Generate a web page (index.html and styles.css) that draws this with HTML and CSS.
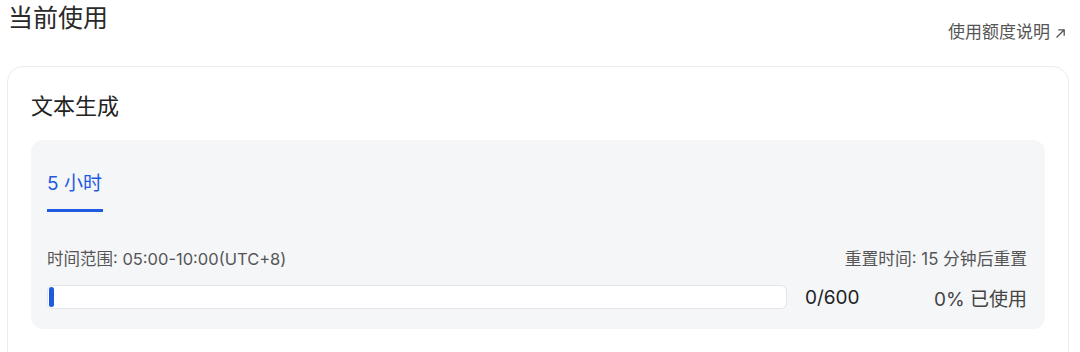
FILE: index.html
```html
<!DOCTYPE html>
<html lang="zh">
<head>
<meta charset="utf-8">
<link rel="stylesheet" href="styles.css">
</head>
<body>
<div class="page">
  <div class="header">
    <h1 class="title">当前使用</h1>
    <a class="doc-link" href="#">使用额度说明
      <svg class="arrow" width="11" height="11" viewBox="0 0 11 11"><path d="M1.5 9.5 L9 2 M3.2 1.8 H9.2 V7.8" fill="none" stroke="#555" stroke-width="1.3"/></svg>
    </a>
  </div>
  <div class="card">
    <h2 class="card-title">文本生成</h2>
    <div class="panel">
      <div class="tabs">
        <div class="tab active">5 小时</div>
      </div>
      <div class="meta">
        <span>时间范围: 05:00-10:00(UTC+8)</span>
        <span class="reset">重置时间: 15 分钟后重置</span>
      </div>
      <div class="usage">
        <div class="bar"><div class="fill" style="width:5px"></div></div>
        <span class="count">0/600</span>
        <span class="pct">0% 已使用</span>
      </div>
    </div>
  </div>
</div>
</body>
</html>
```

FILE: styles.css
```css
* { box-sizing: border-box; }
html, body { margin: 0; padding: 0; background: #fff; }
body {
  font-family: "Inter", "Noto Sans CJK SC", sans-serif;
  color: #222;
  width: 1080px;
  height: 352px;
  overflow: hidden;
}
.page { padding: 0 11px 0 7px; }
.header {
  display: flex;
  justify-content: space-between;
  align-items: flex-start;
  height: 66px;
}
.title {
  margin: 0 0 0 1px;
  font-size: 25px;
  font-weight: 400;
  line-height: 36px;
  color: #2a2a2a;
}
.doc-link {
  margin-top: 21px;
  font-size: 17px;
  line-height: 22px;
  color: #555;
  text-decoration: none;
  display: flex;
  align-items: center;
  gap: 5px;
  margin-right: 3px;
}
.arrow { display: block; margin-top: 3px; }
.card {
  border: 1px solid #ececee;
  border-radius: 16px;
  padding: 24px 23px 0;
  height: 300px;
}
.card-title {
  margin: 0;
  font-size: 22px;
  font-weight: 400;
  line-height: 30px;
  color: #222;
}
.panel {
  margin-top: 19px;
  background: #f5f6f8;
  border-radius: 12px;
  padding: 30px 18px 20px 16px;
}
.tabs { display: flex; height: 42px; }
.tab {
  font-size: 19px;
  line-height: 28px;
  color: #1f5ae0;
  padding-bottom: 11px;
  padding-right: 1px;
  border-bottom: 3px solid #1f5ae0;
  height: 42px;
}
.meta {
  margin-top: 35px;
  display: flex;
  justify-content: space-between;
  font-size: 16.5px;
  line-height: 24px;
  color: #555;
}
.reset { font-size: 16.8px; }
.usage {
  margin-top: 14px;
  display: flex;
  align-items: center;
  height: 24px;
}
.bar {
  width: 740px;
  height: 24px;
  background: #fff;
  border: 1px solid #e4e5e8;
  border-radius: 6px;
  padding: 1px 0 1px 1px;
}
.fill {
  height: 100%;
  background: #1f5ae0;
  border-radius: 3px;
}
.count {
  margin-left: 18px;
  font-size: 19px;
  color: #222;
}
.pct {
  margin-left: auto;
  font-size: 19px;
  color: #444;
}
```
